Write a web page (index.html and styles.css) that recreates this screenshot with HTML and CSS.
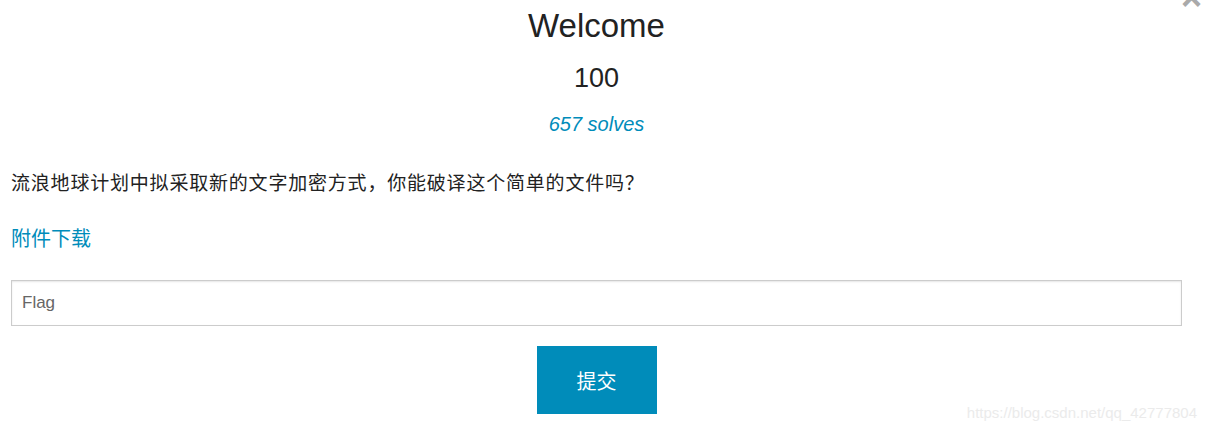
FILE: index.html
```html
<!DOCTYPE html>
<html lang="zh">
<head>
    <meta charset="UTF-8">
    <title>Welcome</title>
    <link rel="stylesheet" href="styles.css">
</head>
<body>
    <div class="modal">
        <span class="close">&times;</span>
        <h1 class="title">Welcome</h1>
        <h2 class="value">100</h2>
        <p class="solves">657 solves</p>

        <p class="desc">流浪地球计划中拟采取新的文字加密方式，你能破译这个简单的文件吗？</p>
        <p class="files"><a href="#">附件下载</a></p>

        <form class="submit-form">
            <input type="text" class="flag-input" placeholder="Flag">
            <button type="button" class="submit-btn">提交</button>
        </form>
    </div>
    <div class="watermark">https://blog.csdn.net/qq_42777804</div>
</body>
</html>
```

FILE: styles.css
```css
body {
    margin: 0;
    font-family: "Liberation Sans", Arial, "Noto Sans CJK SC", sans-serif;
    background-color: #ffffff;
    color: #222222;
}
.modal {
    padding: 0 24px 0 11px;
    height: 431px;
    box-sizing: border-box;
}
.close {
    position: absolute;
    top: -23px;
    right: 4px;
    font-size: 36px;
    color: #aaaaaa;
    font-weight: bold;
}
.title {
    margin: 0;
    padding-top: 8px;
    text-align: center;
    font-size: 33px;
    font-weight: normal;
    line-height: 36px;
}
.value {
    margin: 18px 0 0;
    text-align: center;
    font-size: 27px;
    font-weight: normal;
    line-height: 32px;
}
.solves {
    margin: 17px 0 0;
    text-align: center;
    font-style: italic;
    font-size: 20px;
    line-height: 26px;
    color: #008cba;
}
.desc {
    margin: 33px 0 0;
    font-family: "Noto Sans CJK SC", sans-serif;
    font-size: 19px;
    letter-spacing: 0.8px;
    line-height: 24px;
}
.files {
    margin: 32px 0 0;
    font-family: "Noto Sans CJK SC", sans-serif;
    font-size: 20px;
    line-height: 24px;
}
.files a {
    color: #008cba;
    text-decoration: none;
}
.submit-form {
    margin-top: 30px;
    display: flex;
    flex-direction: column;
    align-items: center;
}
.flag-input {
    width: 100%;
    height: 46px;
    box-sizing: border-box;
    border: 1px solid #cccccc;
    box-shadow: inset 0 1px 2px rgba(0,0,0,0.1);
    padding: 0 10px;
    font-family: "Liberation Sans", Arial, sans-serif;
    font-size: 17px;
    color: #555555;
    outline: none;
}
.flag-input::placeholder {
    color: #666666;
}
.submit-btn {
    margin-top: 20px;
    width: 120px;
    height: 68px;
    border: none;
    background-color: #008cba;
    color: #ffffff;
    font-family: "Noto Sans CJK SC", sans-serif;
    font-size: 20px;
    cursor: pointer;
}
.watermark {
    position: absolute;
    right: 9px;
    bottom: 10px;
    font-size: 15px;
    color: #ebebeb;
}
```
